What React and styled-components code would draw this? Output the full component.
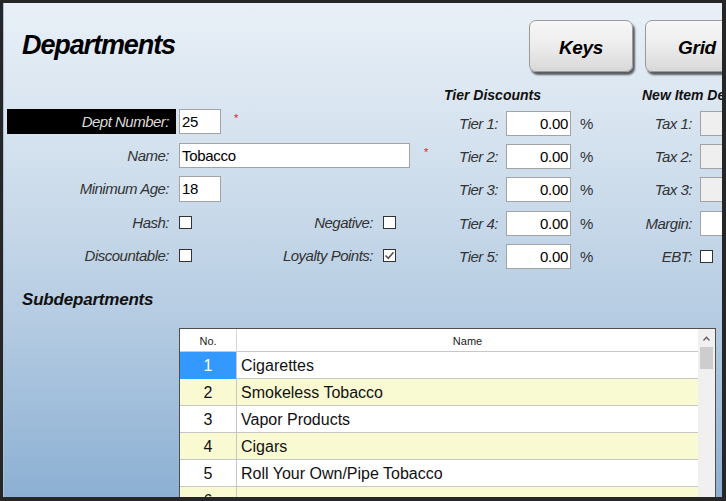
import React from "react";
import styled, { createGlobalStyle } from "styled-components";

const Global = createGlobalStyle`
  html, body { margin: 0; padding: 0; width: 726px; height: 501px; overflow: hidden; background: #262626; }
  * { box-sizing: border-box; }
  body { font-family: "Liberation Sans", Arial, sans-serif; }
`;

const Frame = styled.div`
  width: 726px;
  height: 501px;
  padding: 3px 4px 4px 3px;
  background: #262626;
`;

const Window = styled.div`
  width: 100%;
  height: 100%;
  overflow: hidden;
  display: flex;
  flex-direction: column;
  background: linear-gradient(to bottom, #e9f0f7 0%, #d3e1ee 30%, #b7cde3 62%, #8cb0d3 100%);
  border-left: 1px solid #a9c2da;
`;

const Header = styled.div`
  display: flex;
  align-items: flex-start;
  padding: 17px 0 0 18px;
  height: 81px;
  flex: none;
`;

const Title = styled.h1`
  width: 507px;
  flex: none;
  margin: 10px 0 0;
  font-size: 27px;
  line-height: 30px;
  font-weight: bold;
  font-style: italic;
  letter-spacing: -1.1px;
  color: #000;
`;

const BigButton = styled.button`
  width: 104px;
  height: 52px;
  flex: none;
  margin: 0 12px 0 0;
  border: 1px solid #9a9a9a;
  border-radius: 7px;
  background: linear-gradient(to bottom, #f7f7f7 0%, #ececec 50%, #d8d8d8 100%);
  box-shadow: 2px 3px 2px rgba(0, 0, 0, 0.6);
  font-family: "Liberation Sans", Arial, sans-serif;
  font-size: 19px;
  font-weight: bold;
  font-style: italic;
  letter-spacing: -0.3px;
  color: #000;
  padding: 3px 0 0;
`;

const Form = styled.div`
  display: flex;
  height: 205px;
  padding-left: 3px;
  flex: none;
`;

const LeftSection = styled.div`
  width: 437px;
  flex: none;
  padding-top: 21px;
  display: flex;
  flex-direction: column;
`;

const Row = styled.div`
  display: flex;
  align-items: center;
  height: ${(p) => p.$h || 33.5}px;
  flex: none;
`;

const Label = styled.div`
  width: ${(p) => p.$w}px;
  flex: none;
  text-align: right;
  padding-right: ${(p) => p.$pr ?? 7}px;
  margin-right: 3px;
  font-size: 15px;
  font-style: italic;
  letter-spacing: -0.5px;
  color: ${(p) => (p.$dark ? "#dcdcdc" : "#333")};
  background: ${(p) => (p.$dark ? "#000" : "transparent")};
  height: 25px;
  line-height: 25px;
  white-space: nowrap;
`;

const Input = styled.div`
  width: ${(p) => p.$w}px;
  height: ${(p) => p.$ht || 25}px;
  flex: none;
  border: 1px solid #a3a3a3;
  background: ${(p) => (p.$disabled ? "#efefef" : "#fff")};
  font-size: 15px;
  letter-spacing: -0.3px;
  line-height: 23px;
  color: #000;
  padding: 0 2px;
  text-align: ${(p) => (p.$right ? "right" : "left")};
  white-space: nowrap;
  overflow: hidden;
`;

const Required = styled.span`
  color: #e02020;
  font-size: 11px;
  margin-left: ${(p) => p.$ml}px;
  align-self: flex-start;
  margin-top: 7px;
`;

const Box = styled.div`
  width: 13px;
  height: 13px;
  flex: none;
  border: 1px solid #333;
  background: #fff;
  display: flex;
  align-items: center;
  justify-content: center;
`;

const Section = styled.div`
  width: ${(p) => p.$w}px;
  flex: none;
  display: flex;
  flex-direction: column;
`;

const Heading = styled.div`
  margin-top: 1px;
  margin-bottom: 2px;
  height: 20px;
  line-height: 20px;
  font-size: 14px;
  font-weight: bold;
  font-style: italic;
  color: #111;
  white-space: nowrap;
`;

const Percent = styled.span`
  margin-left: 9px;
  font-size: 15px;
  color: #333;
`;

const SubHeading = styled.div`
  height: 22px;
  line-height: 22px;
  padding-left: 18px;
  font-size: 17px;
  font-weight: bold;
  font-style: italic;
  letter-spacing: -0.2px;
  color: #111;
  flex: none;
`;

const Table = styled.div`
  margin: 17px 0 0 175px;
  width: 537px;
  height: 320px;
  flex: none;
  border: 1px solid #4e4e4e;
  background: #fff;
  display: flex;
`;

const GridBody = styled.div`
  flex: 1;
  display: flex;
  flex-direction: column;
`;

const HeadRow = styled.div`
  display: grid;
  grid-template-columns: 57px 1fr;
  height: 23px;
  border-bottom: 1px solid #c8c8c8;
  font-size: 11px;
  color: #222;
`;

const HeadCell = styled.div`
  text-align: center;
  line-height: 24px;
  border-right: ${(p) => (p.$first ? "1px solid #d6d6d6" : "none")};
`;

const DataRow = styled.div`
  display: grid;
  grid-template-columns: 57px 1fr;
  height: 27px;
  border-bottom: 1px solid #c6c6c6;
  background: ${(p) => (p.$alt ? "#fafad2" : "#fff")};
  font-size: 16px;
  color: #111;
`;

const NoCell = styled.div`
  text-align: center;
  line-height: 27px;
  border-right: 1px solid #c6c6c6;
  background: ${(p) => (p.$sel ? "#3399ff" : "transparent")};
  color: ${(p) => (p.$sel ? "#fff" : "#111")};
`;

const NameCell = styled.div`
  line-height: 27px;
  padding-left: 4px;
`;

const Scrollbar = styled.div`
  width: 17px;
  flex: none;
  background: #f0f0f0;
  display: flex;
  flex-direction: column;
  align-items: center;
`;

const ArrowBtn = styled.div`
  height: 18px;
  width: 100%;
  display: flex;
  align-items: center;
  justify-content: center;
`;

const Thumb = styled.div`
  width: 13px;
  height: 22px;
  background: #cdcdcd;
`;

const Check = () => (
  <svg width="11" height="11" viewBox="0 0 11 11">
    <polyline points="1.5,5.5 4.3,8.3 9.5,2.2" fill="none" stroke="#555" strokeWidth="1.6" />
  </svg>
);

const tiers = ["Tier 1:", "Tier 2:", "Tier 3:", "Tier 4:", "Tier 5:"];
const taxes = [
  { label: "Tax 1:", disabled: true },
  { label: "Tax 2:", disabled: true },
  { label: "Tax 3:", disabled: true },
  { label: "Margin:", disabled: false },
];
const rows = [
  "Cigarettes",
  "Smokeless Tobacco",
  "Vapor Products",
  "Cigars",
  "Roll Your Own/Pipe Tobacco",
  "",
  "",
];

export default function App() {
  return (
    <>
      <Global />
      <Frame>
        <Window>
          <Header>
            <Title>Departments</Title>
            <BigButton>Keys</BigButton>
            <BigButton>Grid</BigButton>
          </Header>

          <Form>
            <LeftSection>
              <Row>
                <Label $w={169} $dark>Dept Number:</Label>
                <Input $w={42}>25</Input>
                <Required $ml={13}>*</Required>
              </Row>
              <Row>
                <Label $w={169}>Name:</Label>
                <Input $w={231}>Tobacco</Input>
                <Required $ml={14}>*</Required>
              </Row>
              <Row>
                <Label $w={169}>Minimum Age:</Label>
                <Input $w={42} $ht={26}>18</Input>
              </Row>
              <Row>
                <Label $w={169}>Hash:</Label>
                <Box />
                <Label $w={188}>Negative:</Label>
                <Box />
              </Row>
              <Row>
                <Label $w={169}>Discountable:</Label>
                <Box />
                <Label $w={188}>Loyalty Points:</Label>
                <Box>
                  <Check />
                </Box>
              </Row>
            </LeftSection>

            <Section $w={198}>
              <Heading>Tier Discounts</Heading>
              {tiers.map((t) => (
                <Row key={t} $h={33.2}>
                  <Label $w={59} $pr={5}>{t}</Label>
                  <Input $w={65} $right>0.00</Input>
                  <Percent>%</Percent>
                </Row>
              ))}
            </Section>

            <Section $w={120}>
              <Heading>New Item Defaults</Heading>
              {taxes.map((t) => (
                <Row key={t.label} $h={33.2}>
                  <Label $w={55} $pr={5}>{t.label}</Label>
                  <Input $w={60} $disabled={t.disabled} />
                </Row>
              ))}
              <Row $h={33.2}>
                <Label $w={55} $pr={5}>EBT:</Label>
                <Box />
              </Row>
            </Section>
          </Form>

          <SubHeading>Subdepartments</SubHeading>

          <Table>
            <GridBody>
              <HeadRow>
                <HeadCell $first>No.</HeadCell>
                <HeadCell>Name</HeadCell>
              </HeadRow>
              {rows.map((name, i) => (
                <DataRow key={i} $alt={i % 2 === 1}>
                  <NoCell $sel={i === 0}>{i + 1}</NoCell>
                  <NameCell>{name}</NameCell>
                </DataRow>
              ))}
            </GridBody>
            <Scrollbar>
              <ArrowBtn>
                <svg width="7" height="5" viewBox="0 0 7 5">
                  <polyline points="0.5,4.5 3.5,1.2 6.5,4.5" fill="none" stroke="#606060" strokeWidth="1.3" />
                </svg>
              </ArrowBtn>
              <Thumb />
            </Scrollbar>
          </Table>
        </Window>
      </Frame>
    </>
  );
}
